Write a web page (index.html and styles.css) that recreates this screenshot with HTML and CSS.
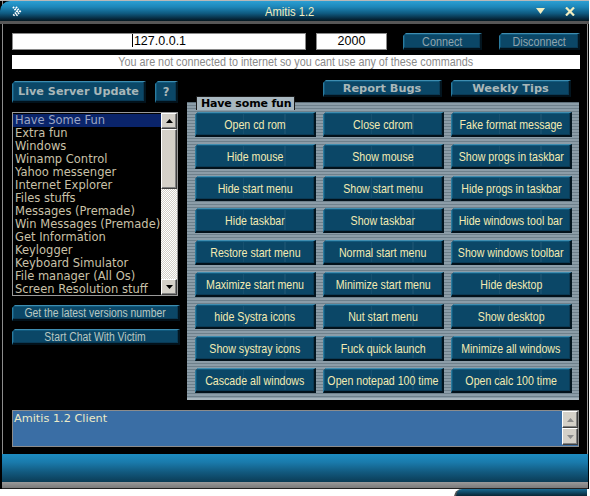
FILE: index.html
```html
<!DOCTYPE html>
<html>
<head>
<meta charset="utf-8">
<title>Amitis 1.2</title>
<link rel="stylesheet" href="styles.css">
</head>
<body>
<div class="window">
  <div class="titlebar">
    <svg class="ticon" width="10" height="11" viewBox="0 0 10 11"><path d="M1 1 L5 5.5 L1 10 M4 1 L8 5.5 L4 10" fill="none" stroke="#fff" stroke-width="2" stroke-dasharray="1.5 1"/></svg>
    <span class="title"><span class="n">Amitis 1.2</span></span>
    <svg class="tdown" width="9" height="6" viewBox="0 0 9 6"><path d="M0 0 H9 L4.5 6 Z" fill="#f2eec0"/></svg>
    <svg class="tclose" width="10" height="9" viewBox="0 0 10 9"><path d="M1 0.5 L9 8.5 M9 0.5 L1 8.5" stroke="#f2eec0" stroke-width="2.2"/></svg>
  </div>
  <div class="content">
    <div class="connrow">
      <div class="field ip"><span class="caret"></span>127.0.0.1</div>
      <div class="field port">2000</div>
      <button class="tbtn connect"><span class="n">Connect</span></button>
      <button class="tbtn disconnect"><span class="n">Disconnect</span></button>
    </div>
    <div class="status"><span class="n">You are not connected to internet so you cant use any of these commands</span></div>
    <div class="main">
      <div class="left">
        <div class="lefttop">
          <button class="tbtn bold live">Live Server Update</button>
          <button class="tbtn bold help">?</button>
        </div>
        <div class="listbox">
          <ul class="items">
            <li class="sel">Have Some Fun</li>
            <li>Extra fun</li>
            <li>Windows</li>
            <li>Winamp Control</li>
            <li>Yahoo messenger</li>
            <li>Internet Explorer</li>
            <li>Files stuffs</li>
            <li>Messages (Premade)</li>
            <li>Win Messages (Premade)</li>
            <li>Get Information</li>
            <li>Keylogger</li>
            <li>Keyboard Simulator</li>
            <li>File manager (All Os)</li>
            <li>Screen Resolution stuff</li>
          </ul>
          <div class="vscroll">
            <div class="sbtn"><svg width="7" height="4" viewBox="0 0 7 4"><path d="M0 4 L3.5 0 L7 4 Z" fill="#000"/></svg></div>
            <div class="thumb"></div>
            <div class="track"></div>
            <div class="sbtn"><svg width="7" height="4" viewBox="0 0 7 4"><path d="M0 0 L3.5 4 L7 0 Z" fill="#000"/></svg></div>
          </div>
        </div>
        <button class="tbtn wide"><span class="n">Get the latest versions number</span></button>
        <button class="tbtn wide chat"><span class="n">Start Chat With Victim</span></button>
      </div>
      <div class="right">
        <div class="righttop">
          <button class="tbtn bold top report">Report Bugs</button>
          <button class="tbtn bold top weekly">Weekly Tips</button>
        </div>
        <div class="panel">
          <span class="legend">Have some fun</span>
          <div class="grid">
            <button class="tbtn cmd"><span class="n">Open cd rom</span></button>
            <button class="tbtn cmd"><span class="n">Close cdrom</span></button>
            <button class="tbtn cmd"><span class="n">Fake format message</span></button>
            <button class="tbtn cmd"><span class="n">Hide mouse</span></button>
            <button class="tbtn cmd"><span class="n">Show mouse</span></button>
            <button class="tbtn cmd"><span class="n">Show progs in taskbar</span></button>
            <button class="tbtn cmd"><span class="n">Hide start menu</span></button>
            <button class="tbtn cmd"><span class="n">Show start menu</span></button>
            <button class="tbtn cmd"><span class="n">Hide progs in taskbar</span></button>
            <button class="tbtn cmd"><span class="n">Hide taskbar</span></button>
            <button class="tbtn cmd"><span class="n">Show taskbar</span></button>
            <button class="tbtn cmd"><span class="n">Hide windows tool bar</span></button>
            <button class="tbtn cmd"><span class="n">Restore start menu</span></button>
            <button class="tbtn cmd"><span class="n">Normal start menu</span></button>
            <button class="tbtn cmd"><span class="n">Show windows toolbar</span></button>
            <button class="tbtn cmd"><span class="n">Maximize start menu</span></button>
            <button class="tbtn cmd"><span class="n">Minimize start menu</span></button>
            <button class="tbtn cmd"><span class="n">Hide desktop</span></button>
            <button class="tbtn cmd"><span class="n">hide Systra icons</span></button>
            <button class="tbtn cmd"><span class="n">Nut start menu</span></button>
            <button class="tbtn cmd"><span class="n">Show desktop</span></button>
            <button class="tbtn cmd"><span class="n">Show systray icons</span></button>
            <button class="tbtn cmd"><span class="n">Fuck quick launch</span></button>
            <button class="tbtn cmd"><span class="n">Minimize all windows</span></button>
            <button class="tbtn cmd"><span class="n">Cascade all windows</span></button>
            <button class="tbtn cmd"><span class="n">Open notepad 100 time</span></button>
            <button class="tbtn cmd"><span class="n">Open calc 100 time</span></button>
          </div>
        </div>
      </div>
    </div>
    <div class="output">
      <div class="outtext">Amitis 1.2 Client</div>
      <div class="outscroll">
        <div class="osbtn"><svg width="7" height="4" viewBox="0 0 7 4"><path d="M0 4 L3.5 0 L7 4 Z" fill="#8a8a8a"/></svg></div>
        <div class="osbtn"><svg width="7" height="4" viewBox="0 0 7 4"><path d="M0 0 L3.5 4 L7 0 Z" fill="#8a8a8a"/></svg></div>
      </div>
    </div>
  </div>
  <div class="footer"></div>
  <div class="footline"></div>
</div>
<div class="below">
  <div class="tab"></div>
</div>
</body>
</html>
```
FILE: styles.css
```css
* { box-sizing: border-box; }
html, body { margin: 0; padding: 0; }
body {
  background: #fff;
  width: 590px;
  height: 496px;
  overflow: hidden;
  font-family: "Liberation Sans", Arial, sans-serif;
}
.n {
  display: inline-block;
  flex-shrink: 0;
  white-space: nowrap;
  transform: scaleX(0.83);
  transform-origin: center;
}
.window {
  width: 589px;
  background: #000;
  box-shadow: inset 2px 0 0 #000, inset 3px 0 0 #8c8c8c, inset -1px 0 0 #000, inset -2px 0 0 #9a9a9a;
  border-top: 1px solid #b8b8b8;
}
.titlebar {
  height: 23px;
  display: flex;
  align-items: center;
  border-top-left-radius: 10px;
  background: linear-gradient(#2b9fd3 0, #1d86b8 30%, #0f5a80 62%, #06263a 90%, #041820 100%);
  border-bottom: 3px solid #565656;
  padding: 0 14px 0 12px;
  color: #f2eec0;
}
.ticon { display: block; }
.title {
  flex: 1;
  text-align: center;
  font-size: 13.5px;
  padding-left: 22px;
}
.tdown { margin-right: 20px; }

.content { padding: 9px 9px 7px 12px; }

.connrow { display: flex; align-items: center; height: 17px; }
.field {
  background: #fff;
  height: 17px;
  border: 1px solid #8a8a8a;
  font-size: 12.5px;
  line-height: 15px;
  text-align: center;
  color: #000;
}
.ip { width: 294px; }
.caret { display: inline-block; width: 1px; height: 13px; background: #000; vertical-align: -2px; margin-right: 1px; }
.port { width: 71px; margin-left: 10px; }

.tbtn {
  display: flex;
  align-items: center;
  justify-content: center;
  padding: 0;
  margin: 0;
  background: #0b4767;
  border-style: solid;
  border-width: 1px 2px 2px 1px;
  border-color: #3f8db0 #03151f #02111a #2c7b9e;
  box-shadow: inset -1px -1px 0 #0a3a55, inset 1px 1px 0 #115a7e;
  color: #f3ebb2;
  font-family: "Liberation Sans", Arial, sans-serif;
  font-size: 12.5px;
  white-space: nowrap;
  overflow: hidden;
  clip-path: polygon(3px 0, 100% 0, 100% 100%, 0 100%, 0 3px);
}
.connect { width: 79px; height: 17px; margin-left: 16px; color: #8fa4ae; font-size: 13px; }
.disconnect { width: 81px; height: 17px; margin-left: 17px; color: #8fa4ae; font-size: 13px; }

.status {
  margin-top: 5px;
  width: 568px;
  height: 14px;
  background: #fff;
  color: #8a8a8a;
  font-size: 13px;
  line-height: 14px;
  text-align: center;
  overflow: hidden;
}

.main { display: flex; margin-top: 11px; gap: 7px; }
.left { width: 168px; display: flex; flex-direction: column; }
.lefttop { display: flex; gap: 9px; margin-top: 1px; }
.bold {
  font-family: "DejaVu Sans", Verdana, sans-serif;
  font-weight: bold;
  color: #a9b7b9;
}
.live { width: 134px; height: 22px; font-size: 11.2px; }
.help { width: 23px; height: 22px; font-size: 11.5px; }

.listbox {
  margin-top: 9px;
  width: 166px;
  height: 184px;
  border: 1px solid #9a9a9a;
  display: flex;
}
.items {
  list-style: none;
  margin: 0;
  padding: 1px 0 0 0;
  flex: 1;
  overflow: hidden;
  font-family: "DejaVu Sans", Verdana, sans-serif;
  font-size: 11.5px;
  line-height: 13px;
  color: #c9c1a8;
}
.items li { padding-left: 2px; white-space: nowrap; height: 13px; }
.items li:last-child { height: 12px; }
.items li.sel { background: #0a246a; color: #9ca6c4; }
.vscroll { width: 16px; display: flex; flex-direction: column; }
.sbtn, .thumb, .osbtn {
  background: #d4d0c8;
  border: 1px solid;
  border-color: #fff #404040 #404040 #fff;
  box-shadow: inset -1px -1px 0 #808080;
}
.sbtn { height: 16px; display: flex; align-items: center; justify-content: center; }
.thumb { height: 60px; }
.track {
  flex: 1;
  background: repeating-conic-gradient(#d4d0c8 0 25%, #ffffff 0 50%) 0 0 / 2px 2px;
}

.wide { width: 168px; height: 16px; color: #b9c8c2; font-size: 12.5px; }
.left .wide { margin-top: 9px; }
.left .chat { margin-top: 8px; }

.right { width: 392px; display: flex; flex-direction: column; }
.righttop { display: flex; gap: 9px; padding-left: 136px; }
.top { height: 17px; font-size: 11.3px; }
.report { width: 119px; }
.weekly { width: 120px; }

.panel {
  position: relative;
  margin-top: 5px;
  height: 298px;
  background: repeating-linear-gradient(to bottom, #8c9da8 0 2px, #6e808b 2px 3px);
  border-top: 1px solid #5f707a;
  border-bottom: 2px solid #a8b6be;
  padding: 9px 7px 0 8px;
}
.legend {
  position: absolute;
  left: 9px;
  top: -7px;
  height: 14px;
  padding: 0 3px 0 4px;
  background: #a9b8c0;
  border: 1px solid #1a1a1a;
  border-bottom: none;
  font-family: "DejaVu Sans", Verdana, sans-serif;
  font-weight: bold;
  font-size: 11px;
  letter-spacing: -0.15px;
  line-height: 13px;
  color: #000;
}
.grid {
  display: grid;
  grid-template-columns: repeat(3, 121px);
  grid-auto-rows: 25px;
  column-gap: 7px;
  row-gap: 7px;
}
.cmd {
  font-size: 12.8px;
  background:
    linear-gradient(to right, transparent 0 40%, rgba(255,255,255,0.05) 40% 41%, transparent 41% 75%, rgba(255,255,255,0.05) 75% 76%, transparent 76%),
    #0b4767;
}

.output {
  margin-top: 10px;
  width: 567px;
  height: 37px;
  background: #3a6ea5;
  border: 1px solid #8c8c8c;
  display: flex;
}
.outtext {
  flex: 1;
  padding: 1px 0 0 1px;
  font-family: "DejaVu Sans", Verdana, sans-serif;
  font-size: 11.3px;
  color: #ecebc8;
}
.outscroll { width: 16px; display: flex; flex-direction: column; }
.osbtn { height: 17px; display: flex; align-items: center; justify-content: center; }

.footer {
  margin: 0 1px 0 2px;
  height: 28px;
  background: linear-gradient(#1d8cc2 0, #1a7aab 30%, #12597e 65%, #0b3c56 100%);
}
.footline {
  margin: 0 1px 0 2px;
  height: 7px;
  background: linear-gradient(#9a9a9a, #7a7a7a);
  border-bottom: 1px solid #222;
}
.below { display: flex; justify-content: flex-end; padding-right: 3px; }
.tab {
  width: 133px;
  height: 8px;
  border-top-left-radius: 14px;
  border-left: 2px solid #555;
  background: linear-gradient(#1a6a92, #0d3a52 60%, #081c28);
}
```
